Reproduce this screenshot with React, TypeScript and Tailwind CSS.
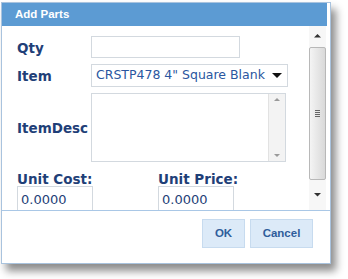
import React from 'react'

const label = "font-['DejaVu_Sans',sans-serif] font-bold text-[13.5px] text-[#1f3f78]"
const box = "font-['DejaVu_Sans',sans-serif] border border-[#d3d9df] bg-white"
const field = `${box} text-[13px] text-[#1f3f78]`

const Arrow = ({ up, color = '#333', size = 4 }: { up?: boolean; color?: string; size?: number }) => (
    <svg width={size * 2} height={size} viewBox="0 0 8 4" className="shrink-0">
        {up ? <path d="M0 4 L4 0 L8 4 Z" fill={color} /> : <path d="M0 0 L8 0 L4 4 Z" fill={color} />}
    </svg>
)

const App = () => {
    return (
        <div className="w-[348px] h-[279px] bg-white overflow-hidden pt-[2px] pl-[1px]">
            {/* Dialog */}
            <div className="w-[330px] h-[262px] border border-[#a9c3de] bg-white shadow-[5px_7px_8px_rgba(0,0,0,0.45)] flex flex-col">
                {/* Title bar */}
                <div className="w-[325px] h-[23px] bg-[#5c9bd3] flex items-center pl-[13px] font-['Liberation_Sans',sans-serif] font-bold text-[11.5px] text-white">
                    Add Parts
                </div>

                {/* Content */}
                <div className="h-[184px] flex">
                    <div className="w-[307px] overflow-hidden pl-[15px] pt-[10px]">
                        <div className="flex items-center h-[22px]">
                            <span className={`w-[74px] ${label} pt-[2px]`}>Qty</span>
                            <div className={`w-[149px] h-[22px] ${field}`}></div>
                        </div>
                        <div className="flex items-center h-[23px] mt-[6px]">
                            <span className={`w-[74px] ${label} pt-[2px]`}>Item</span>
                            <div className={`w-[197px] h-[23px] ${box} text-[12.5px] text-[#2a56a0] flex items-center pl-[4px] pr-[5px] justify-between`}>
                                <span className="whitespace-nowrap">CRSTP478 4" Square Blank</span>
                                <Arrow size={5} color="#111" />
                            </div>
                        </div>
                        <div className="flex items-center h-[69px] mt-[6px]">
                            <span className={`w-[74px] ${label} pt-[2px]`}>ItemDesc</span>
                            <div className={`w-[195px] h-[69px] ${box} flex justify-end`}>
                                <div className="w-[17px] h-full bg-[#f3f3f3] border-l border-[#e2e2e2] flex flex-col items-center justify-between py-[4px]">
                                    <Arrow up color="#9a9a9a" size={3} />
                                    <Arrow color="#9a9a9a" size={3} />
                                </div>
                            </div>
                        </div>
                        <div className="flex mt-[9px] h-[15px] items-center">
                            <span className={`w-[141px] ${label} leading-[15px] pt-[2px]`}>Unit Cost:</span>
                            <span className={`${label} leading-[15px] pt-[2px]`}>Unit Price:</span>
                        </div>
                        <div className="flex">
                            <div className={`w-[76px] h-[26px] ${field} pl-[3px] pt-[3px] mr-[65px]`}>0.0000</div>
                            <div className={`w-[76px] h-[26px] ${field} pl-[3px] pt-[3px]`}>0.0000</div>
                        </div>
                    </div>

                    {/* Scrollbar */}
                    <div className="w-[17px] h-full bg-[#f7f7f7] flex flex-col items-center">
                        <div className="h-[20px] flex items-center justify-center">
                            <Arrow up color="#333" size={3.5} />
                        </div>
                        <div className="w-[17px] h-[133px] mt-[1px] rounded-[2px] border border-[#b8b8b8] bg-gradient-to-r from-[#f4f4f4] to-[#d9d9d9] flex flex-col items-center justify-center gap-[1px]">
                            <div className="w-[5px] h-[1px] bg-[#666]"></div>
                            <div className="w-[5px] h-[1px] bg-[#666]"></div>
                            <div className="w-[5px] h-[1px] bg-[#666]"></div>
                            <div className="w-[5px] h-[1px] bg-[#666]"></div>
                        </div>
                        <div className="flex-1 flex items-center justify-center">
                            <Arrow color="#333" size={3.5} />
                        </div>
                    </div>
                </div>

                {/* Button pane */}
                <div className="flex-1 border-t border-[#a9c7e6] flex justify-end items-start pt-[8px] pr-[17px] gap-[5px]">
                    <button className="w-[43px] h-[29px] bg-[#dceaf8] border border-[#c7dbef] font-['Liberation_Sans',sans-serif] font-bold text-[11.5px] text-[#2f5d9b]">
                        OK
                    </button>
                    <button className="w-[63px] h-[29px] bg-[#dceaf8] border border-[#c7dbef] font-['Liberation_Sans',sans-serif] font-bold text-[11.5px] text-[#2f5d9b]">
                        Cancel
                    </button>
                </div>
            </div>
        </div>
    )
}

export default App
